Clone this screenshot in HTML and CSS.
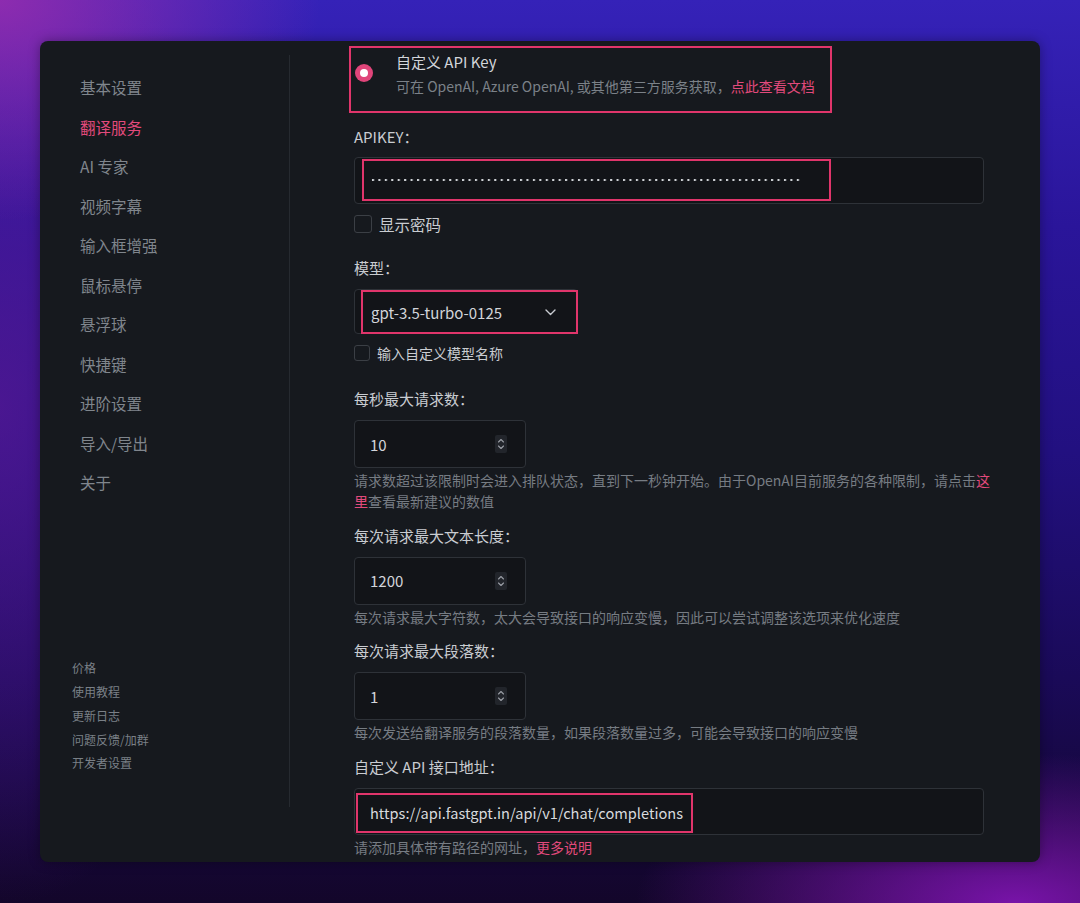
FILE: index.html
```html
<!DOCTYPE html>
<html lang="zh-CN">
<head>
<meta charset="utf-8">
<title>翻译服务设置</title>
<link rel="stylesheet" href="styles.css">
</head>
<body>
<div class="window">
  <aside class="sidebar">
    <nav class="nav">
      <ul class="menu">
        <li class="menu-item">基本设置</li>
        <li class="menu-item active">翻译服务</li>
        <li class="menu-item">AI 专家</li>
        <li class="menu-item">视频字幕</li>
        <li class="menu-item">输入框增强</li>
        <li class="menu-item">鼠标悬停</li>
        <li class="menu-item">悬浮球</li>
        <li class="menu-item">快捷键</li>
        <li class="menu-item">进阶设置</li>
        <li class="menu-item">导入/导出</li>
        <li class="menu-item">关于</li>
      </ul>
      <ul class="links">
        <li class="link-item">价格</li>
        <li class="link-item">使用教程</li>
        <li class="link-item">更新日志</li>
        <li class="link-item">问题反馈/加群</li>
        <li class="link-item">开发者设置</li>
      </ul>
    </nav>
  </aside>
  <main class="main">
    <div class="option hl">
      <span class="radio"><span class="radio-dot"></span></span>
      <div class="option-text">
        <div class="option-title">自定义 API Key</div>
        <div class="option-sub">可在 OpenAI, Azure OpenAI, 或其他第三方服务获取，<a class="pink">点此查看文档</a></div>
      </div>
    </div>

    <div class="label label-first">APIKEY：</div>
    <div class="input wide">
      <div class="hl key-hl"><span class="dots"></span></div>
    </div>

    <label class="check-row">
      <span class="checkbox"></span>
      <span class="check-text">显示密码</span>
    </label>

    <div class="label label-model">模型：</div>
    <div class="select">
      <div class="hl select-hl">
        <span class="select-text">gpt-3.5-turbo-0125</span>
        <svg class="chev" width="11" height="7" viewBox="0 0 11 7"><polyline points="1,1 5.5,5.5 10,1" fill="none" stroke="#c9ccd1" stroke-width="1.4" stroke-linecap="round" stroke-linejoin="round"/></svg>
      </div>
    </div>

    <label class="check-row small">
      <span class="checkbox sm"></span>
      <span class="check-text sm">输入自定义模型名称</span>
    </label>

    <div class="label label-first-group">每秒最大请求数：</div>
    <div class="input num">
      <span class="num-text">10</span>
      <span class="spin"><svg width="8" height="14" viewBox="0 0 8 14"><path d="M1.5 5 L4 2.5 L6.5 5 M1.5 9 L4 11.5 L6.5 9" fill="none" stroke="#9a9ea5" stroke-width="1.1" stroke-linecap="round" stroke-linejoin="round"/></svg></span>
    </div>
    <p class="help">请求数超过该限制时会进入排队状态，直到下一秒钟开始。由于OpenAI目前服务的各种限制，请点击<a class="pink">这</a><a class="pink">里</a>查看最新建议的数值</p>

    <div class="label label-group">每次请求最大文本长度：</div>
    <div class="input num">
      <span class="num-text">1200</span>
      <span class="spin"><svg width="8" height="14" viewBox="0 0 8 14"><path d="M1.5 5 L4 2.5 L6.5 5 M1.5 9 L4 11.5 L6.5 9" fill="none" stroke="#9a9ea5" stroke-width="1.1" stroke-linecap="round" stroke-linejoin="round"/></svg></span>
    </div>
    <p class="help">每次请求最大字符数，太大会导致接口的响应变慢，因此可以尝试调整该选项来优化速度</p>

    <div class="label label-group">每次请求最大段落数：</div>
    <div class="input num">
      <span class="num-text">1</span>
      <span class="spin"><svg width="8" height="14" viewBox="0 0 8 14"><path d="M1.5 5 L4 2.5 L6.5 5 M1.5 9 L4 11.5 L6.5 9" fill="none" stroke="#9a9ea5" stroke-width="1.1" stroke-linecap="round" stroke-linejoin="round"/></svg></span>
    </div>
    <p class="help">每次发送给翻译服务的段落数量，如果段落数量过多，可能会导致接口的响应变慢</p>

    <div class="label label-group">自定义 API 接口地址：</div>
    <div class="input wide url">
      <div class="hl url-hl"><span class="url-text">https://api.fastgpt.in/api/v1/chat/completions</span></div>
    </div>
    <p class="help">请添加具体带有路径的网址，<a class="pink">更多说明</a></p>
  </main>
</div>
</body>
</html>
```
FILE: styles.css
```css
* { box-sizing: border-box; }

html, body {
  margin: 0;
  padding: 0;
}

body {
  width: 1080px;
  height: 903px;
  overflow: hidden;
  font-family: "Noto Sans CJK SC", "Noto Sans", sans-serif;
  background:
    radial-gradient(ellipse 380px 150px at 94% 100%, rgba(125, 20, 175, 0.95) 0%, rgba(125, 20, 175, 0) 100%),
    radial-gradient(ellipse 320px 220px at 0% 0%, rgba(150, 45, 175, 0.9) 0%, rgba(150, 45, 175, 0) 100%),
    radial-gradient(ellipse 260px 500px at 0% 45%, rgba(90, 25, 150, 0.7) 0%, rgba(90, 25, 150, 0) 100%),
    linear-gradient(180deg, #3522b8 0%, #2a159a 25%, #221080 50%, #1a0a58 75%, #13062a 100%);
}

.window {
  margin: 41px 0 0 40px;
  width: 1000px;
  height: 821px;
  background: #16191e;
  border-radius: 8px;
  display: flex;
  overflow: hidden;
  box-shadow: 0 0 12px rgba(0, 0, 0, 0.35);
}

/* Sidebar */
.sidebar {
  width: 250px;
  flex: none;
  padding-top: 14px;
}

.nav {
  height: 752px;
  border-right: 1px solid #262a30;
  display: flex;
  flex-direction: column;
  justify-content: space-between;
}

.menu, .links {
  list-style: none;
  margin: 0;
  padding: 0;
}

.menu {
  padding: 13px 0 0 40px;
}

.menu-item {
  height: 39.5px;
  line-height: 39.5px;
  font-size: 15.5px;
  color: #80868d;
}

.menu-item.active {
  color: #e24a7c;
}

.links {
  padding: 0 0 32px 32px;
}

.link-item {
  height: 23.75px;
  line-height: 23.75px;
  font-size: 12px;
  color: #7a8087;
}

/* Main */
.main {
  flex: 1;
  padding: 5px 55px 0 64px;
}

.hl {
  border: 2.5px solid #e0356b;
}

.pink {
  color: #e24a7c;
}

.option {
  margin-left: -5px;
  width: 483px;
  height: 67px;
  display: flex;
  align-items: flex-start;
  padding: 3px 0 0 4px;
}

.radio {
  width: 18px;
  height: 18px;
  border-radius: 50%;
  background: #e0457a;
  margin-top: 13px;
  display: flex;
  align-items: center;
  justify-content: center;
  flex: none;
}

.radio-dot {
  width: 8px;
  height: 8px;
  border-radius: 50%;
  background: #ffffff;
}

.option-text {
  margin-left: 23px;
}

.option-title {
  font-size: 15px;
  line-height: 22px;
  color: #d2d5da;
}

.option-sub {
  margin-top: 2px;
  font-size: 14px;
  line-height: 22px;
  color: #7b8188;
}

.label {
  font-size: 15px;
  line-height: 22px;
  color: #c9ccd1;
}

.label-first { margin-top: 13px; }
.label-model { margin-top: 22px; }
.label-first-group { margin-top: 25px; }
.label-group { margin-top: 12.5px; }

.input {
  border: 1px solid #2e3238;
  border-radius: 4px;
  background: #121418;
  margin-top: 9px;
}

.wide {
  width: 630px;
  height: 47px;
}

.key-hl {
  margin: 1px 0 0 7px;
  width: 469px;
  height: 42px;
  display: flex;
  align-items: center;
  padding-left: 7px;
}

.dots {
  display: block;
  width: 430px;
  height: 4px;
  background-image: radial-gradient(circle at 2px 2px, #cfd2d6 0.9px, rgba(207, 210, 214, 0) 1.5px);
  background-size: 6.45px 4px;
}

.check-row {
  display: flex;
  align-items: center;
  margin-top: 9px;
  height: 22px;
}

.checkbox {
  width: 18px;
  height: 18px;
  border: 1.5px solid #3b3f45;
  border-radius: 3px;
  flex: none;
}

.check-text {
  margin-left: 7px;
  font-size: 15.5px;
  color: #c9ccd1;
}

.check-row.small {
  margin-top: 9px;
  height: 20px;
}

.checkbox.sm {
  width: 16px;
  height: 16px;
}

.check-text.sm {
  font-size: 14px;
}

.select {
  margin-top: 10px;
  width: 224px;
  height: 45px;
  border: 1px solid #2e3238;
  border-radius: 4px;
  background: #121418;
  display: flex;
}

.select-hl {
  flex: 1;
  margin: 0 -1px -1px 6px;
  display: flex;
  align-items: center;
  justify-content: space-between;
  padding: 0 20px 0 8px;
}

.select-text {
  font-size: 15px;
  color: #d2d5da;
}

.num {
  width: 172px;
  height: 48px;
  margin-top: 10px;
  display: flex;
  align-items: center;
  justify-content: space-between;
  padding: 0 18px 0 15px;
}

.num-text {
  font-size: 15px;
  color: #d2d5da;
}

.spin {
  width: 12px;
  height: 18px;
  background: #22252b;
  border-radius: 2px;
  display: flex;
  align-items: center;
  justify-content: center;
}

.help {
  margin: 2px 0 0;
  font-size: 14px;
  line-height: 21px;
  color: #767c83;
  width: 640px;
}

.url {
  margin-top: 10px;
}

.url-hl {
  margin: 4px 0 0 1px;
  width: 337px;
  height: 40px;
  display: flex;
  align-items: center;
  padding-left: 12px;
}

.url-text {
  font-size: 14.6px;
  color: #d8dade;
  white-space: nowrap;
}
```
